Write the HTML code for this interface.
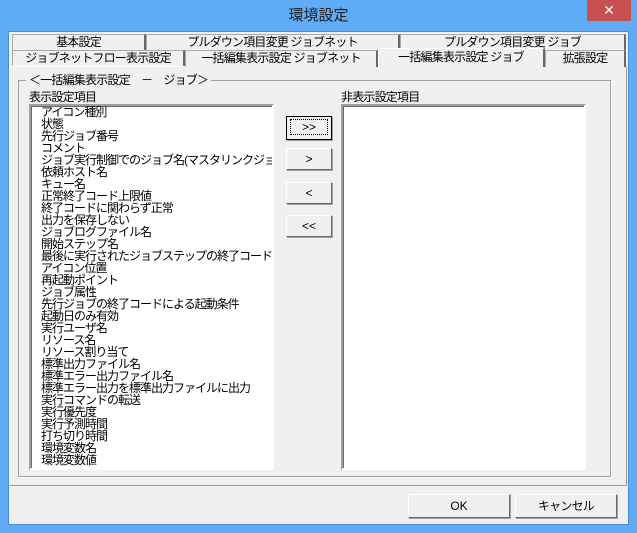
<!DOCTYPE html>
<html><head><meta charset="utf-8"><style>
*{box-sizing:border-box;margin:0;padding:0}
body{width:637px;height:533px;background:#5fabf5;position:relative;overflow:hidden;font-family:"Liberation Sans","Noto Sans CJK JP",sans-serif;font-size:12px;color:#000}
.abs{position:absolute}
.client{left:8px;top:31px;width:621px;height:494px;background:#f0f0f0;border:1px solid #4a8ed6}
.title{left:0;top:0;width:637px;height:31px;text-align:center;line-height:31px;font-size:15px;color:#222}
.close{left:587px;top:0;width:44px;height:21px;background:#c75050;color:#fff;text-align:center;line-height:20px;font-size:14px}
.tab{height:17px;background:#f0f0f0;border:1px solid #aaa;border-bottom:none;border-right:2px solid #696969;text-align:center;line-height:15px;font-size:12px;letter-spacing:-0.8px;white-space:nowrap;overflow:hidden}
.panel{left:9px;top:66px;width:618px;height:420px;border:1px solid #999;border-top-color:#fff;border-left-color:#fff;background:#f0f0f0}
.grp{left:18px;top:80px;width:593px;height:397px;border:1px solid #a0a0a0;box-shadow:1px 1px 0 #fff}
.list{background:#fff;border:2px solid;border-color:#a0a0a0 #fff #fff #a0a0a0;box-shadow:inset 1px 1px 0 #696969;overflow:hidden}
.list div{height:12px;line-height:12px;white-space:nowrap;padding-left:10px;font-size:12px;letter-spacing:-1px}
.btn{background:#f0f0f0;border:1px solid;border-color:#fff #696969 #696969 #fff;box-shadow:1px 1px 0 #a0a0a0;text-align:center;font-size:12px}
.lbl{letter-spacing:-0.8px}
</style></head><body>
<div class="abs title">環境設定</div>
<div class="abs close">✕</div>
<div class="abs client"></div>
<div class="abs tab" style="left:12px;top:34px;width:134px">基本設定</div>
<div class="abs tab" style="left:146px;top:34px;width:254px">プルダウン項目変更 ジョブネット</div>
<div class="abs tab" style="left:400px;top:34px;width:226px">プルダウン項目変更 ジョブ</div>
<div class="abs tab" style="left:12px;top:50px;width:173px">ジョブネットフロー表示設定</div>
<div class="abs panel"></div>
<div class="abs tab" style="left:185px;top:50px;width:193px">一括編集表示設定 ジョブネット</div>
<div class="abs tab" style="left:545px;top:50px;width:81px">拡張設定</div>
<div class="abs tab" style="left:378px;top:48px;width:167px;height:19px;border-color:#fff #696969 #fff #fff;line-height:16px">一括編集表示設定 ジョブ</div>
<div class="abs grp"></div>
<div class="abs lbl" style="left:26px;top:73px;background:#f0f0f0;padding:0 3px;line-height:14px">＜一括編集表示設定　－　ジョブ＞</div>
<div class="abs lbl" style="left:29px;top:90px;line-height:14px">表示設定項目</div>
<div class="abs lbl" style="left:341px;top:90px;line-height:14px">非表示設定項目</div>
<div class="abs list" style="left:29px;top:104px;width:245px;height:366px;padding-top:0">
<div>アイコン種別</div><div>状態</div><div>先行ジョブ番号</div><div>コメント</div><div>ジョブ実行制御でのジョブ名(マスタリンクジョブ</div><div>依頼ホスト名</div><div>キュー名</div><div>正常終了コード上限値</div><div>終了コードに関わらず正常</div><div>出力を保存しない</div><div>ジョブログファイル名</div><div>開始ステップ名</div><div>最後に実行されたジョブステップの終了コード名</div><div>アイコン位置</div><div>再起動ポイント</div><div>ジョブ属性</div><div>先行ジョブの終了コードによる起動条件</div><div>起動日のみ有効</div><div>実行ユーザ名</div><div>リソース名</div><div>リソース割り当て</div><div>標準出力ファイル名</div><div>標準エラー出力ファイル名</div><div>標準エラー出力を標準出力ファイルに出力</div><div>実行コマンドの転送</div><div>実行優先度</div><div>実行予測時間</div><div>打ち切り時間</div><div>環境変数名</div><div>環境変数値</div>
</div>
<div class="abs list" style="left:341px;top:104px;width:245px;height:366px"></div>
<div class="abs btn" style="left:286px;top:116px;width:46px;height:24px;border:1px solid #000;line-height:20px"><span style="border:1px dotted #000;display:inline-block;width:38px;line-height:14px">&gt;&gt;</span></div>
<div class="abs btn" style="left:286px;top:148px;width:46px;height:22px;line-height:20px">&gt;</div>
<div class="abs btn" style="left:286px;top:182px;width:46px;height:22px;line-height:20px">&lt;</div>
<div class="abs btn" style="left:286px;top:215px;width:46px;height:22px;line-height:20px">&lt;&lt;</div>
<div class="abs btn" style="left:408px;top:494px;width:102px;height:24px;line-height:22px">OK</div>
<div class="abs btn lbl" style="left:515px;top:494px;width:102px;height:24px;line-height:22px">キャンセル</div>
</body></html>
